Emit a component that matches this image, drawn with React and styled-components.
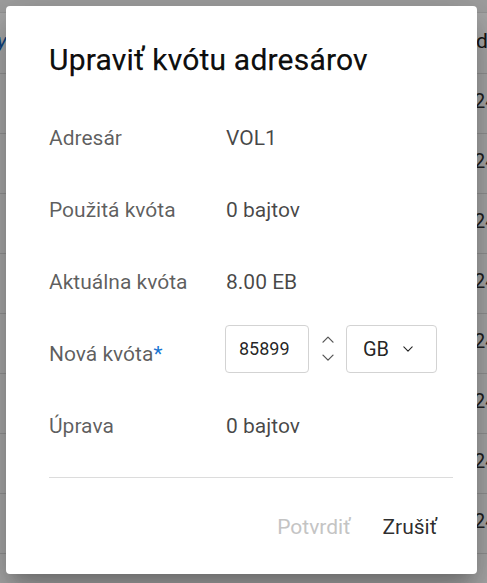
import React from "react";
import styled, { createGlobalStyle } from "styled-components";

const Global = createGlobalStyle`
  html, body { margin: 0; padding: 0; }
  body {
    font-family: Roboto, "Noto Sans", "Liberation Sans", sans-serif;
    background: #ffffff;
    overflow: hidden;
  }
`;

const Page = styled.div`
  width: 487px;
  height: 583px;
  overflow: hidden;
  position: relative;
  background: #ffffff;
`;

const TopBar = styled.div`
  height: 12px;
  background: #f2f2f2;
  border-bottom: 1px solid #e3e3e3;
`;

const TableRow = styled.div`
  display: grid;
  grid-template-columns: 474px 1fr;
  align-items: center;
  height: ${(p) => (p.$header ? 61 : 60)}px;
  padding-bottom: ${(p) => (p.$header ? 4 : 6)}px;
  box-sizing: border-box;
  border-bottom: 1px solid #e0e0e0;
  font-size: ${(p) => (p.$header ? 21 : 20)}px;
  white-space: nowrap;
  overflow: hidden;
`;

const LeftCell = styled.span`
  color: #1565c0;
  margin-left: -3px;
  font-style: italic;
`;

const RightCell = styled.span`
  color: ${(p) => (p.$header ? "#222" : "#333")};
  margin-left: ${(p) => (p.$header ? 2 : 0)}px;
`;

const Overlay = styled.div`
  position: absolute;
  inset: 0;
  background: rgba(0, 0, 0, 0.34);
  display: flex;
  padding: 6px 10px 9px 6px;
  box-sizing: border-box;
`;

const Dialog = styled.div`
  flex: 1;
  background: #ffffff;
  border-radius: 4px;
  box-shadow: 0 11px 15px -7px rgba(0, 0, 0, 0.2), 0 24px 38px 3px rgba(0, 0, 0, 0.14),
    0 9px 46px 8px rgba(0, 0, 0, 0.12);
  padding: 37px 24px 0 43px;
  display: flex;
  flex-direction: column;
`;

const Title = styled.h2`
  margin: 0 0 37px 0;
  font-size: 30px;
  line-height: 34px;
  font-weight: 400;
  color: rgba(0, 0, 0, 0.96);
  letter-spacing: 0.2px;
  -webkit-text-stroke: 0.25px rgba(0, 0, 0, 0.9);
`;

const Fields = styled.div`
  display: flex;
  flex-direction: column;
  gap: 24px;
`;

const Row = styled.div`
  display: flex;
  align-items: center;
  height: 48px;
  font-size: 21px;
  line-height: 26px;
`;

const Label = styled.div`
  width: 177px;
  flex: none;
  color: rgba(0, 0, 0, 0.64);
`;

const Required = styled.span`
  color: #1976d2;
`;

const Value = styled.div`
  color: rgba(0, 0, 0, 0.72);
`;

const Controls = styled.div`
  display: flex;
  align-items: center;
  margin-top: -11px;
  margin-left: -1px;
`;

const NumberBox = styled.div`
  width: 84px;
  height: 48px;
  box-sizing: border-box;
  border: 1px solid #d3d3d3;
  border-radius: 4px;
  display: flex;
  align-items: center;
  padding-left: 13px;
  color: rgba(0, 0, 0, 0.87);
  font-size: 18px;
`;

const Spinner = styled.div`
  width: 37px;
  display: flex;
  flex-direction: column;
  align-items: center;
  gap: 11px;
  color: #555;
`;

const SelectBox = styled.div`
  width: 91px;
  height: 48px;
  box-sizing: border-box;
  border: 1px solid #d3d3d3;
  border-radius: 4px;
  display: flex;
  align-items: center;
  padding-left: 16px;
  gap: 14px;
  color: rgba(0, 0, 0, 0.87);
  font-size: 20px;
`;

const Divider = styled.div`
  height: 1px;
  background: #dcdcdc;
  margin-top: 27px;
`;

const Actions = styled.div`
  display: flex;
  justify-content: flex-end;
  margin-top: 31px;
`;

const ActionButton = styled.button`
  border: none;
  background: transparent;
  font-family: inherit;
  font-size: 21px;
  line-height: 36px;
  height: 36px;
  padding: 0 16px;
  color: ${(p) => (p.disabled ? "#c4c4c4" : "rgba(0,0,0,0.84)")};
  cursor: ${(p) => (p.disabled ? "default" : "pointer")};
`;

const Chevron = ({ up, size = 12 }) => (
  <svg width={size} height={size * 0.6} viewBox="0 0 12 7" fill="none">
    <path
      d={up ? "M1 6 L6 1 L11 6" : "M1 1 L6 6 L11 1"}
      stroke="currentColor"
      strokeWidth="1.3"
      strokeLinecap="round"
      strokeLinejoin="round"
    />
  </svg>
);

const rows = [0, 1, 2, 3, 4, 5, 6, 7];

export default function App() {
  return (
    <Page>
      <Global />
      <TopBar />
      <TableRow $header>
        <LeftCell>y</LeftCell>
        <RightCell $header>d</RightCell>
      </TableRow>
      {rows.map((r) => (
        <TableRow key={r}>
          <span />
          <RightCell>24</RightCell>
        </TableRow>
      ))}
      <Overlay>
        <Dialog>
          <Title>Upraviť kvótu adresárov</Title>
          <Fields>
            <Row>
              <Label>Adresár</Label>
              <Value>VOL1</Value>
            </Row>
            <Row>
              <Label>Použitá kvóta</Label>
              <Value>0 bajtov</Value>
            </Row>
            <Row>
              <Label>Aktuálna kvóta</Label>
              <Value>8.00 EB</Value>
            </Row>
            <Row>
              <Label>
                Nová kvóta<Required>*</Required>
              </Label>
              <Controls>
                <NumberBox>85899</NumberBox>
                <Spinner>
                  <Chevron up />
                  <Chevron />
                </Spinner>
                <SelectBox>
                  GB
                  <Chevron size={10} />
                </SelectBox>
              </Controls>
            </Row>
            <Row>
              <Label>Úprava</Label>
              <Value>0 bajtov</Value>
            </Row>
          </Fields>
          <Divider />
          <Actions>
            <ActionButton disabled>Potvrdiť</ActionButton>
            <ActionButton>Zrušiť</ActionButton>
          </Actions>
        </Dialog>
      </Overlay>
    </Page>
  );
}
